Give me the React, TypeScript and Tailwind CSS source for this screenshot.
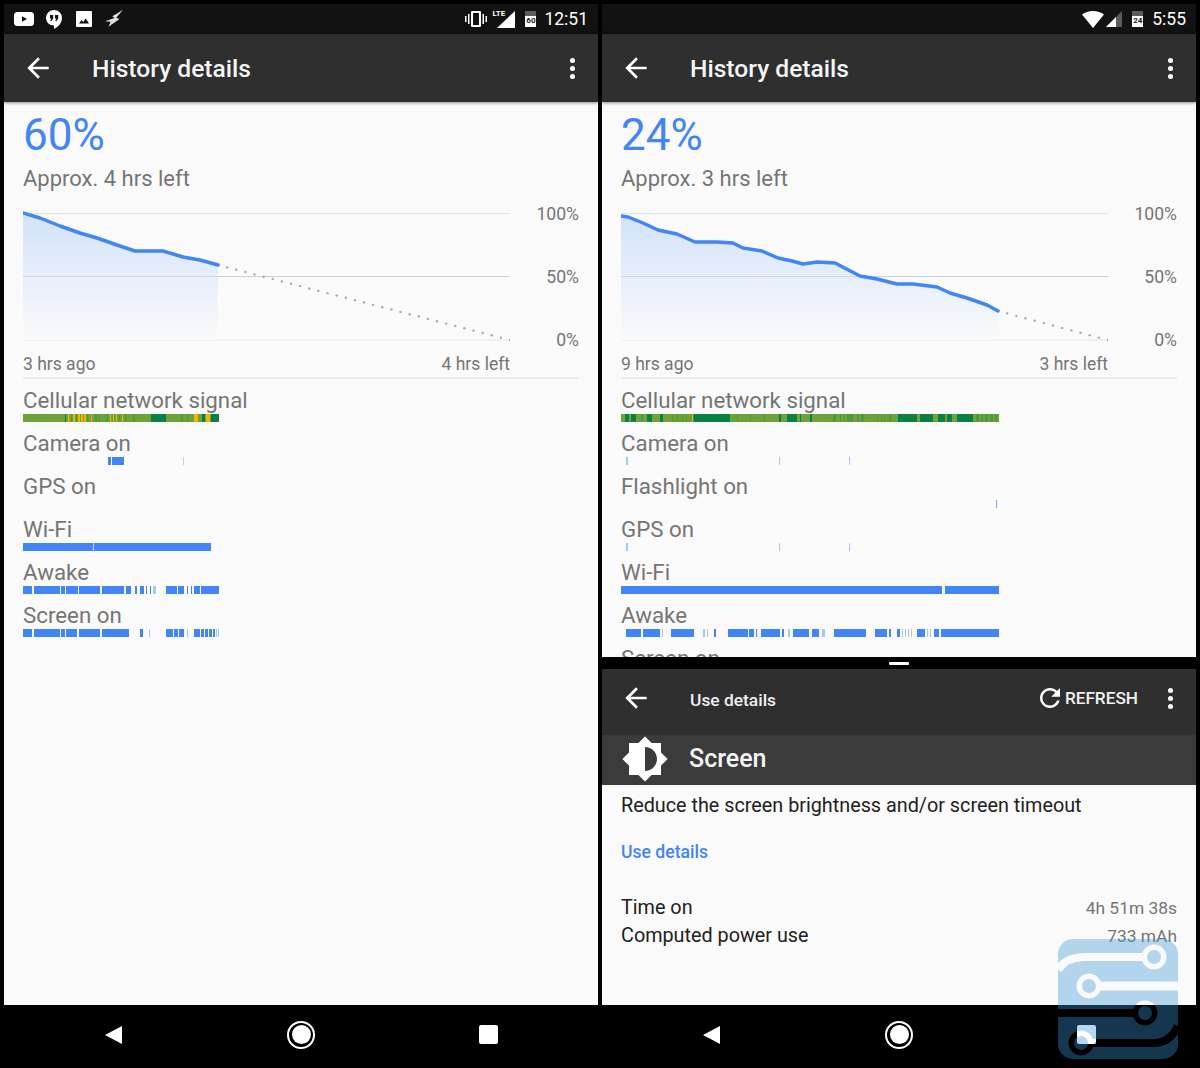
import type { ReactNode } from "react";

type Seg = [number, number, string?];

const BLUE = "#4285f4";
const PALE = "#a9c6f8";
const BASE = "#6da33a";
const DARK = "#0b8043";
const YEL = "#f4b400";
const MID = "#4f9a3c";

const arrowBack = "M20 11H7.83l5.59-5.59L12 4l-8 8 8 8 1.41-1.41L7.83 13H20v-2z";
const refresh =
  "M17.65 6.35C16.2 4.9 14.21 4 12 4c-4.42 0-7.99 3.58-7.99 8s3.57 8 7.99 8c3.73 0 6.84-2.55 7.73-6h-2.08c-.82 2.33-3.04 4-5.65 4-3.31 0-6-2.69-6-6s2.69-6 6-6c1.66 0 3.14.69 4.22 1.78L13 11h7V4l-2.35 2.35z";
const brightness =
  "M20 15.31L23.31 12 20 8.69V4h-4.69L12 .69 8.69 4H4v4.69L.69 12 4 15.31V20h4.69L12 23.31 15.31 20H20v-4.69zM12 18V6c3.31 0 6 2.69 6 6s-2.69 6-6 6z";

function Icon({ d, size = 24, className = "" }: { d: string; size?: number; className?: string }) {
  return (
    <svg width={size} height={size} viewBox="0 0 24 24" fill="white" className={`block shrink-0 ${className}`}>
      <path fillRule="evenodd" d={d} />
    </svg>
  );
}

function Kebab() {
  return (
    <div className="flex w-[6px] flex-col gap-[3px]">
      <span className="size-[5px] rounded-full bg-white" />
      <span className="size-[5px] rounded-full bg-white" />
      <span className="size-[5px] rounded-full bg-white" />
    </div>
  );
}

function Timeline({ w, segs, base }: { w: number; segs: Seg[]; base?: string }) {
  return (
    <svg width={w} height={8} className="block">
      {base && <rect width={w} height={8} fill={base} />}
      {segs.map(([a, b, c], i) => (
        <rect key={i} x={a} width={b - a} height={8} fill={c ?? BLUE} />
      ))}
    </svg>
  );
}

function Row({ label, segs, w = 378, base }: { label: string; segs?: Seg[]; w?: number; base?: string }) {
  return (
    <div className="mb-[7px]">
      <p className="h-[28px] text-[22.3px] leading-[28px] text-[#757575]">{label}</p>
      {segs ? <Timeline w={w} segs={segs} base={base} /> : <div className="h-2" />}
    </div>
  );
}

function Chart({ points, id }: { points: number[][]; id: string }) {
  const line = points.map((p) => p.join(",")).join(" ");
  const last = points[points.length - 1];
  const n = Math.floor(Math.hypot(487 - last[0], 131 - last[1]) / 9.4);
  const dots = Array.from({ length: n }, (_, i) => {
    const t = (i + 1) / n;
    return [last[0] + (487 - last[0]) * t, last[1] + (131 - last[1]) * t];
  });
  return (
    <svg width={487} height={134} className="block shrink-0">
      <defs>
        <linearGradient id={id} x1="0" y1="0" x2="0" y2="1">
          <stop offset="0" stopColor="#cfe0fa" />
          <stop offset="1" stopColor="#fafafa" />
        </linearGradient>
      </defs>
      <line x1="0" x2="487" y1="4.5" y2="4.5" stroke="#e4e4e4" />
      <line x1="0" x2="487" y1="67.5" y2="67.5" stroke="#d4d4d4" />
      <line x1="0" x2="487" y1="131" y2="131" stroke="#ececec" strokeWidth="1.5" />
      <polygon points={`0,${points[0][1]} ${line} ${last[0]},131 0,131`} fill={`url(#${id})`} opacity="0.9" />
      <line x1="0" x2="487" y1="67.5" y2="67.5" stroke="#c8ccd4" strokeOpacity="0.6" />
      <polyline points={line} fill="none" stroke={BLUE} strokeWidth="3.5" strokeLinejoin="round" strokeLinecap="round" />
      {dots.map(([x, y], i) => (
        <circle key={i} cx={x} cy={y} r="1.2" fill="#a8a8a8" />
      ))}
    </svg>
  );
}

function Summary({ pct, left, ago, right, points, id }: { pct: string; left: string; ago: string; right: string; points: number[][]; id: string }) {
  return (
    <>
      <p className="mt-[7px] h-[52px] text-[44px] leading-[52px] text-[#4285f4]">{pct}</p>
      <p className="mt-[3px] h-[30px] text-[22px] leading-[30px] text-[#757575]">{left}</p>
      <div className="mt-[15px] flex justify-between">
        <Chart points={points} id={id} />
        <div className="-mt-[4px] flex w-[69px] flex-col gap-[45px] text-right text-[17.6px] leading-[18px] text-[#757575]">
          <span>100%</span>
          <span>50%</span>
          <span>0%</span>
        </div>
      </div>
      <div className="mt-[3px] flex h-[24px] w-[487px] items-center justify-between text-[17.5px] text-[#757575]">
        <span>{ago}</span>
        <span>{right}</span>
      </div>
      <div className="mb-[7px] mt-[1px] h-[2px] bg-[#eaeaea]" />
    </>
  );
}

function Toolbar({ title }: { title: string }) {
  return (
    <div className="z-10 flex h-[68px] shrink-0 items-center bg-[#2f2f2f] shadow-[0_1px_3px_rgba(0,0,0,0.45)]">
      <Icon d={arrowBack} size={32} className="ml-[18px]" />
      <h1 className="ml-[38px] flex-1 pt-[2px] text-[24.6px] font-medium text-[#f5f5f5]">{title}</h1>
      <div className="mr-[22px]">
        <Kebab />
      </div>
    </div>
  );
}

function StatusBar({ children }: { children: ReactNode }) {
  return (
    <div className="flex h-[30px] shrink-0 items-center bg-[#121212] pr-[10px] text-white">{children}</div>
  );
}

function Battery({ label, level }: { label: string; level: string }) {
  return (
    <div className="relative h-[16px] w-[11px] bg-[#5c5c5c]">
      <div className={`absolute inset-x-0 bottom-0 bg-white ${level}`} />
      <span className="absolute inset-x-0 top-[5px] text-center text-[8px] font-bold leading-[9px] text-[#222]">{label}</span>
    </div>
  );
}

function NavBar() {
  return (
    <div className="flex h-[63px] shrink-0 items-center bg-black pb-[4px]">
      <svg width="20" height="20" viewBox="0 0 20 20" className="ml-[100px]">
        <path d="M1 10 18 1v18z" fill="white" />
      </svg>
      <div className="ml-[163px] flex size-[28px] items-center justify-center rounded-full border-2 border-white">
        <span className="size-[19px] rounded-full bg-white" />
      </div>
      <span className="ml-[164px] size-[19px] rounded-[2px] bg-white" />
    </div>
  );
}

const chartA = [[0,4],[17,9],[37,17],[57,24],[74,29],[94,36],[112,42],[140,42],[160,48],[177,51],[195,56]];
const chartB = [[0,7],[7,8],[22,14],[37,21],[56,25],[74,33],[96,33],[112,34],[122,39],[141,42],[157,49],[171,52],[182,55],[196,53],[214,54],[239,67],[256,70],[276,75],[292,75],[316,78],[329,84],[346,89],[366,96],[377,102]];

const cellA: Seg[] = [
  [42,43,DARK],[45,46.5,YEL],[48,49,MID],[50,52,YEL],[53,54,MID],[55,57,YEL],[58,60,YEL],[61,63,YEL],[64,65,MID],[68,69,YEL],[72,74,MID],[76,77,MID],[83,85,MID],[87,88,YEL],[90,91,YEL],[93,94,YEL],[96,97,MID],[99,100,YEL],[102,103,MID],[110,112,MID],
  [128,143,DARK],[158,160,MID],[164,165,MID],[171,175,YEL],[179,182,DARK],[183,187,YEL],[188,196,DARK],
];
const awakeA: Seg[] = [[0,9],[11,37],[38,42],[43,55],[56,77],[79,101],[103,108],[112,114],[117,121],[123,124],[127,128],[130,133,PALE],[143,154],[155,161],[164,165],[168,169],[171,177],[178,196]];
const screenA: Seg[] = [[0,9],[11,37],[38,42],[43,54],[56,77],[79,106],[117,120],[126,127,PALE],[143,150],[151,155],[156,161],[164,165,PALE],[171,177],[178,181],[182,185],[186,189],[190,192],[193,194,PALE],[195,196,PALE]];

const cellB: Seg[] = [
  [4,8,DARK],[10,15,DARK],[20,22,MID],[26,31,DARK],[39,42,DARK],[51,52,MID],[56,57,MID],[61,62,MID],[65,66,MID],[71,72,YEL],[72.5,109,DARK],[116,117,MID],[129,130,MID],[143,144,MID],[158,160,DARK],[166,176,DARK],[179,180,DARK],[189,191,DARK],
  [212,215,MID],[219,220,MID],[223,224,MID],[226,232,MID],[236,238,MID],[240,243,MID],[256,257,MID],[260,261,MID],[263,264,MID],[268,270,MID],[277,296,DARK],[299,312,DARK],[317,324,DARK],[326,331,DARK],[336,352,DARK],[355,358,MID],[360,362,MID],[364,367,MID],[369,372,MID],[374,376,MID],
];
const pings: Seg[] = [[5,7,PALE],[158,159,PALE],[228,229,PALE]];
const awakeB: Seg[] = [[5,20],[22,39],[41,42,PALE],[50,73],[82,84,PALE],[86,87,PALE],[93,95],[107,127],[128,133],[135,136],[140,159],[161,163],[167,169,PALE],[172,188],[191,198],[201,204,PALE],[213,245],[254,266],[268,270],[276,279],[281,282,PALE],[284,285,PALE],[287,288,PALE],[290,291,PALE],[296,304],[306,307,PALE],[309,310,PALE],[313,318],[320,378]];

function LeftPanel() {
  return (
    <section className="flex flex-1 flex-col">
      <StatusBar>
        <svg width="20" height="14" viewBox="0 0 20 14" className="ml-[10px]">
          <rect width="20" height="14" rx="3.5" fill="white" />
          <path d="M8 4.2v5.6L13 7z" fill="#121212" />
        </svg>
        <svg width="16" height="19" viewBox="0 0 16 19" className="ml-[12px]">
          <path fillRule="evenodd" fill="white" d="M8 0a8 8 0 0 0-8 8c0 4.4 3.6 7.5 8 7.5V19c4.5-2.2 8-6.3 8-11a8 8 0 0 0-8-8zM4 5h3.2v3.5L5.6 11H4.2l1.2-2.5H4zm5 0h3.2v3.5L10.600 11H9.200l1.200-2.500H9z" />
        </svg>
        <svg width="16" height="16" viewBox="0 0 16 16" className="ml-[14px]">
          <path fillRule="evenodd" fill="white" d="M1 0h14a1 1 0 0 1 1 1v14a1 1 0 0 1-1 1H1a1 1 0 0 1-1-1V1a1 1 0 0 1 1-1zm2 12.500h10L9.800 7.500 7.300 11 5.600 9z" />
        </svg>
        <svg width="20" height="18" viewBox="0 0 18 16" className="ml-[12px]">
          <path fill="#e0e0e0" d="M17 0 7.500 5.500 9.500 7 1 10l5 .5L4 15l10-7-3-1.200z" />
        </svg>
        <div className="ml-auto flex items-center">
          <svg width="22" height="18" viewBox="0 0 22 18">
            <path fillRule="evenodd" fill="white" d="M7 1h8a1 1 0 0 1 1 1v14a1 1 0 0 1-1 1H7a1 1 0 0 1-1-1V2a1 1 0 0 1 1-1zm1 2v12h6V3zM0 6h1.500v6H0zM3 4h1.500v10H3zM17.500 4H19v10h-1.500zM20.500 6H22v6h-1.500z" />
          </svg>
          <div className="relative ml-[6px] h-[18px] w-[22px]">
            <svg width="22" height="18" viewBox="0 0 22 18" className="absolute inset-0">
              <path d="M22 1v17H4z" fill="white" />
            </svg>
            <span className="absolute -left-[1px] -top-[1px] text-[8px] font-bold leading-[9px] text-white">LTE</span>
          </div>
          <div className="ml-[10px]">
            <Battery label="60" level="h-[11px]" />
          </div>
          <span className="ml-[8px] mt-[2px] text-[17.5px] leading-none">12:51</span>
        </div>
      </StatusBar>
      <Toolbar title="History details" />
      <div className="min-h-0 flex-1 overflow-hidden bg-[#fafafa] px-[19px]">
        <Summary pct="60%" left="Approx. 4 hrs left" ago="3 hrs ago" right="4 hrs left" points={chartA} id="fa" />
        <Row label="Cellular network signal" w={196} base={BASE} segs={cellA} />
        <Row label="Camera on" w={196} segs={[[85,88],[89,101],[160,160.8,PALE]]} />
        <Row label="GPS on" />
        <Row label="Wi-Fi" w={196} segs={[[0,70],[70.700,188]]} />
        <Row label="Awake" w={196} segs={awakeA} />
        <Row label="Screen on" w={196} segs={screenA} />
      </div>
      <NavBar />
    </section>
  );
}

function RightPanel() {
  return (
    <section className="flex flex-1 flex-col">
      <StatusBar>
        <div className="ml-auto flex items-center">
          <svg width="22" height="17" viewBox="0 0 22 17">
            <path d="M0 3.500C3 1.300 6.800 0 11 0s8 1.300 11 3.500L11 17z" fill="white" />
          </svg>
          <svg width="16" height="16" viewBox="0 0 16 16" className="ml-[2px]">
            <path d="M16 0v16H0z" fill="#5c5c5c" />
            <path d="M10 6v10H0z" fill="white" />
          </svg>
          <div className="ml-[10px]">
            <Battery label="24" level="h-[11px]" />
          </div>
          <span className="ml-[9px] mt-[2px] text-[17.5px] leading-none">5:55</span>
        </div>
      </StatusBar>
      <Toolbar title="History details" />
      <div className="min-h-0 flex-1 overflow-hidden bg-[#fafafa] px-[19px]">
        <Summary pct="24%" left="Approx. 3 hrs left" ago="9 hrs ago" right="3 hrs left" points={chartB} id="fb" />
        <Row label="Cellular network signal" base={BASE} segs={cellB} />
        <Row label="Camera on" segs={pings} />
        <Row label="Flashlight on" segs={[[375,376,"#7ba4f0"]]} />
        <Row label="GPS on" segs={pings} />
        <Row label="Wi-Fi" segs={[[0,321],[324,378]]} />
        <Row label="Awake" segs={awakeB} />
        <Row label="Screen on" />
      </div>
      <div className="flex h-[12px] shrink-0 items-center justify-center bg-black">
        <span className="h-[3px] w-[20px] rounded-[1px] bg-white" />
      </div>
      <div className="flex h-[66px] shrink-0 items-center bg-[#2f2f2f] pb-[8px]">
        <Icon d={arrowBack} size={32} className="ml-[18px]" />
        <span className="ml-[38px] flex-1 pt-[4px] text-[17.4px] font-medium text-[#f0f0f0]">Use details</span>
        <Icon d={refresh} size={30} />
        <span className="pt-[1px] text-[17.2px] font-medium text-[#f0f0f0]">REFRESH</span>
        <div className="ml-[30px] mr-[22px]">
          <Kebab />
        </div>
      </div>
      <div className="flex h-[50px] shrink-0 items-center bg-[#3b3b3b] pb-[2px]">
        <Icon d={brightness} size={48} className="ml-[19px]" />
        <span className="ml-[20px] text-[25px] font-medium text-[#f5f5f5]">Screen</span>
      </div>
      <div className="flex h-[220px] shrink-0 flex-col bg-[#fafafa] px-[19px] text-[19.8px] text-[#212121]">
        <p className="mt-[7px] leading-[28px]">Reduce the screen brightness and/or screen timeout</p>
        <p className="mt-[18px] text-[17.6px] font-medium leading-[28px] text-[#4285f4]">Use details</p>
        <div className="mt-[28px] flex h-[28px] items-center justify-between">
          <span>Time on</span>
          <span className="text-[17.4px] text-[#757575]">4h 51m 38s</span>
        </div>
        <div className="flex h-[28px] items-center justify-between">
          <span>Computed power use</span>
          <span className="text-[17.4px] text-[#757575]">733 mAh</span>
        </div>
      </div>
      <NavBar />
    </section>
  );
}

function Watermark() {
  return (
    <svg width="120" height="120" viewBox="0 0 120 120" className="absolute left-[1058px] top-[939px]">
      <mask id="wm">
        <rect width="120" height="120" rx="15" fill="white" />
        <g fill="none" stroke="black">
          <path d="M85 18H26Q8 18 0 31" strokeWidth="8" />
          <circle cx="96" cy="18" r="9.700" strokeWidth="5.500" />
          <path d="M42 47H120" strokeWidth="9" />
          <circle cx="31" cy="47" r="9.700" strokeWidth="5.500" />
          <path d="M0 74H76" strokeWidth="8" />
          <circle cx="87" cy="74" r="9.700" strokeWidth="5.500" />
          <path d="M34 104H96Q112 104 120 87" strokeWidth="8" />
          <circle cx="23" cy="104" r="9.700" strokeWidth="5.500" />
        </g>
      </mask>
      <rect width="120" height="120" fill="#3695d6" fillOpacity="0.37" mask="url(#wm)" />
    </svg>
  );
}

export default function App() {
  return (
    <div
      className="relative flex h-[1068px] w-[1200px] gap-1 overflow-hidden bg-black px-1 pt-1"
      style={{ fontFamily: "Roboto, sans-serif" }}
    >
      <LeftPanel />
      <RightPanel />
      <Watermark />
    </div>
  );
}
